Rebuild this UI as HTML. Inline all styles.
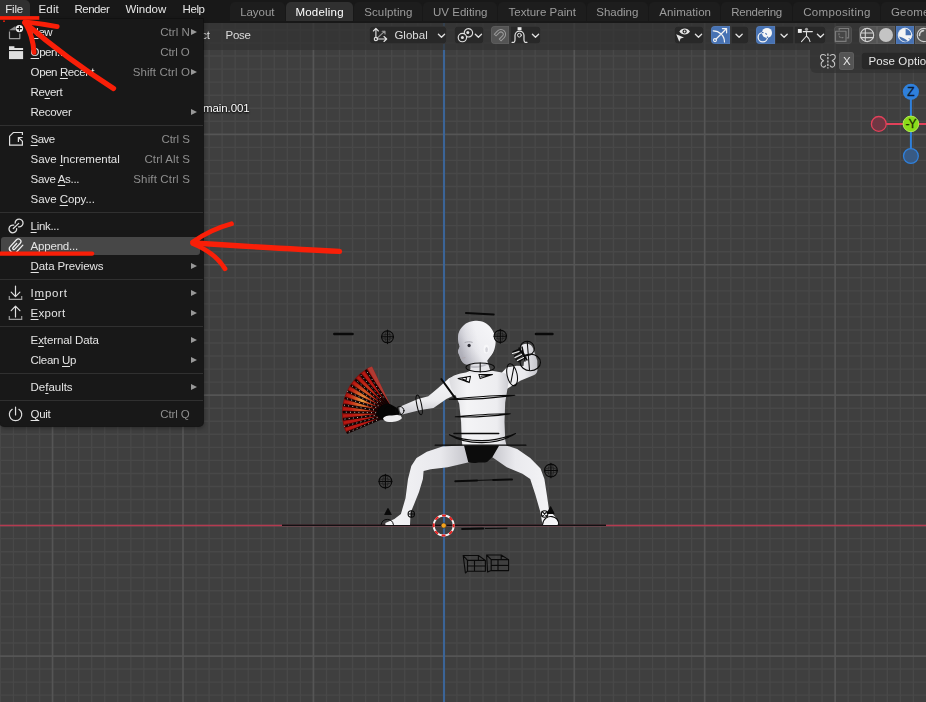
<!DOCTYPE html>
<html><head><meta charset="utf-8"><title>Blender</title>
<style>
html,body{margin:0;padding:0;}
body{width:926px;height:702px;overflow:hidden;position:relative;background:#3f3f3f;font-family:"Liberation Sans",sans-serif;font-size:11.5px;color:#e0e0e0;}
#vp{position:absolute;left:0;top:0;width:926px;height:702px;}
#topbar{position:absolute;left:0;top:0;width:926px;height:22.7px;background:#181818;}
#hdr{position:absolute;left:0;top:22px;width:926px;height:27.5px;background:rgba(50,50,50,0.72);}
#tset{position:absolute;left:809.8px;top:49.5px;width:130px;height:23.8px;background:rgba(50,50,50,0.72);border-radius:0 0 0 6px;}
.abs{position:absolute;white-space:nowrap;}
.t{position:absolute;white-space:nowrap;line-height:14px;}
.t u{text-decoration:underline;text-underline-offset:1.5px;text-decoration-thickness:1px;}
.sh{text-shadow:0 0 2px #000,0 1px 2px #000;}
.tab{position:absolute;top:1.8px;height:19.2px;border-radius:5px 5px 0 0;background:#1d1d1d;}
#menu{position:absolute;left:0;top:19px;width:202.8px;height:406.6px;background:#181818;border-radius:0 0 4px 4px;box-shadow:0 0 0 1px rgba(16,16,16,.8), 1px 2px 4px rgba(0,0,0,.35);}
.hl{position:absolute;background:#474747;border-radius:3px;}
.sep{position:absolute;left:0;width:202.8px;height:1px;background:#303030;}
.arr{position:absolute;left:191.2px;width:0;height:0;border-left:6px solid #989898;border-top:3.5px solid transparent;border-bottom:3.5px solid transparent;}
.btn{position:absolute;height:18.4px;border-radius:4px;background:#282828;box-shadow:inset 0 0 0 0.8px rgba(255,255,255,0.07);}
#ui{position:absolute;left:0;top:0;width:926px;height:702px;will-change:transform;}

</style></head><body>
<svg id="vp" width="926" height="702" viewBox="0 0 926 702">
<rect width="926" height="702" fill="#3f3f3f"/>
<path d="M0 16.92H926M0 29.97H926M0 43.01H926M0 56.05H926M0 69.10H926M0.39 0V702M0 82.14H926M13.43 0V702M0 95.18H926M26.47 0V702M0 108.22H926M39.52 0V702M0 121.27H926M65.60 0V702M0 147.35H926M78.65 0V702M0 160.40H926M91.69 0V702M0 173.44H926M104.73 0V702M0 186.48H926M117.78 0V702M0 199.53H926M130.82 0V702M0 212.57H926M143.86 0V702M0 225.61H926M156.90 0V702M0 238.65H926M169.95 0V702M0 251.70H926M196.03 0V702M0 277.78H926M209.08 0V702M0 290.83H926M222.12 0V702M0 303.87H926M235.16 0V702M0 316.91H926M248.21 0V702M0 329.96H926M261.25 0V702M0 343.00H926M274.29 0V702M0 356.04H926M287.33 0V702M0 369.08H926M300.38 0V702M0 382.13H926M326.46 0V702M0 408.21H926M339.51 0V702M0 421.26H926M352.55 0V702M0 434.30H926M365.59 0V702M0 447.34H926M378.63 0V702M0 460.38H926M391.68 0V702M0 473.43H926M404.72 0V702M0 486.47H926M417.76 0V702M0 499.51H926M430.81 0V702M0 512.56H926M456.89 0V702M0 538.64H926M469.94 0V702M0 551.69H926M482.98 0V702M0 564.73H926M496.02 0V702M0 577.77H926M509.07 0V702M0 590.82H926M522.11 0V702M0 603.86H926M535.15 0V702M0 616.90H926M548.19 0V702M0 629.94H926M561.24 0V702M0 642.99H926M587.32 0V702M0 669.07H926M600.37 0V702M0 682.12H926M613.41 0V702M0 695.16H926M626.45 0V702M639.50 0V702M652.54 0V702M665.58 0V702M678.62 0V702M691.67 0V702M717.75 0V702M730.80 0V702M743.84 0V702M756.88 0V702M769.92 0V702M782.97 0V702M796.01 0V702M809.05 0V702M822.10 0V702M848.18 0V702M861.23 0V702M874.27 0V702M887.31 0V702M900.36 0V702M913.40 0V702" stroke="#484848" stroke-width="1.4" fill="none"/><path d="M0 3.88H926M52.56 0V702M0 134.31H926M182.99 0V702M0 264.74H926M313.42 0V702M0 395.17H926M443.85 0V702M0 525.60H926M574.28 0V702M0 656.03H926M704.71 0V702M835.14 0V702" stroke="#555555" stroke-width="1.7" fill="none"/>
<line x1="0" y1="525.5" x2="926" y2="525.5" stroke="#b53a50" stroke-width="1.45"/>
<line x1="444" y1="0" x2="444" y2="702" stroke="#3b6497" stroke-width="2.1"/>
<defs>
<linearGradient id="sk" x1="0" y1="0" x2="0" y2="1"><stop offset="0" stop-color="#f6f6f8"/><stop offset="0.65" stop-color="#ebebee"/><stop offset="1" stop-color="#c8c8ce"/></linearGradient>
<linearGradient id="skh" x1="1" y1="0" x2="0" y2="1"><stop offset="0" stop-color="#f8f8fa"/><stop offset="0.6" stop-color="#ececf0"/><stop offset="1" stop-color="#b8b8c0"/></linearGradient>
<linearGradient id="skl" x1="0" y1="0" x2="1" y2="0"><stop offset="0" stop-color="#f4f4f6"/><stop offset="0.65" stop-color="#e9e9ed"/><stop offset="1" stop-color="#c4c4ca"/></linearGradient>
<linearGradient id="skr" x1="1" y1="0" x2="0" y2="0"><stop offset="0" stop-color="#f6f6f8"/><stop offset="0.65" stop-color="#eaeaee"/><stop offset="1" stop-color="#c6c6cc"/></linearGradient>
<linearGradient id="skt" x1="0" y1="0" x2="1" y2="0"><stop offset="0" stop-color="#dcdce0"/><stop offset="0.3" stop-color="#f4f4f6"/><stop offset="0.8" stop-color="#ededf0"/><stop offset="1" stop-color="#cacad0"/></linearGradient>
<linearGradient id="fsh" x1="0" y1="0.45" x2="0.5" y2="0.3"><stop offset="0" stop-color="#9c9ca8" stop-opacity="0.6"/><stop offset="0.5" stop-color="#b0b0bc" stop-opacity="0.25"/><stop offset="1" stop-color="#c0c0c8" stop-opacity="0"/></linearGradient>
<radialGradient id="fanhl" cx="0.4" cy="0.5" r="0.3"><stop offset="0" stop-color="#f0b048" stop-opacity="0.95"/><stop offset="1" stop-color="#e06020" stop-opacity="0"/></radialGradient>
</defs>
<g id="fig">
<path d="M282 525.2H606" stroke="#121012" stroke-width="1.5"/>
<path d="M392.3 409.4L372.1 366.7L368.8 367.5L366.0 369.2L363.3 371.1L360.6 373.1L358.2 375.3L355.8 377.7L353.7 380.2L351.7 382.8L349.8 385.6L348.2 388.4L346.7 391.4L345.4 394.4L344.3 397.6L343.5 400.8L342.8 404.0L342.3 407.3L342.1 410.6L342.0 413.9L342.2 417.2L342.5 420.5L343.1 423.8L343.9 427.0L344.9 430.1L346.8 432.9L384.8 416.9 Z" fill="#86110d"/>
<path d="M384.2 395.6L369.1 368.5" stroke="#c21a14" stroke-width="2.6" opacity="0.85"/>
<path d="M381.9 397.1L363.1 372.4" stroke="#c21a14" stroke-width="2.6" opacity="0.85"/>
<path d="M379.8 398.9L357.8 377.1" stroke="#c21a14" stroke-width="2.6" opacity="0.85"/>
<path d="M378.0 401.0L353.2 382.4" stroke="#c21a14" stroke-width="2.6" opacity="0.85"/>
<path d="M376.5 403.3L349.3 388.4" stroke="#c21a14" stroke-width="2.6" opacity="0.85"/>
<path d="M375.3 405.9L346.4 394.8" stroke="#c21a14" stroke-width="2.6" opacity="0.85"/>
<path d="M374.5 408.5L344.3 401.6" stroke="#c21a14" stroke-width="2.6" opacity="0.85"/>
<path d="M374.1 411.3L343.2 408.6" stroke="#c21a14" stroke-width="2.6" opacity="0.85"/>
<path d="M374.0 414.0L343.1 415.7" stroke="#c21a14" stroke-width="2.6" opacity="0.85"/>
<path d="M374.4 416.8L343.9 422.7" stroke="#c21a14" stroke-width="2.6" opacity="0.85"/>
<path d="M375.1 419.5L345.8 429.5" stroke="#c21a14" stroke-width="2.6" opacity="0.85"/>
<path d="M392.3 409.4L372.1 366.7L368.8 367.5L366.0 369.2L363.3 371.1L360.6 373.1L358.2 375.3L355.8 377.7L353.7 380.2L351.7 382.8L349.8 385.6L348.2 388.4L346.7 391.4L345.4 394.4L344.3 397.6L343.5 400.8L342.8 404.0L342.3 407.3L342.1 410.6L342.0 413.9L342.2 417.2L342.5 420.5L343.1 423.8L343.9 427.0L344.9 430.1L346.8 432.9L384.8 416.9 Z" fill="url(#fanhl)"/>
<path d="M390.6 405.8L372.0 366.4L367.6 368.2L389.9 406.1Z" fill="#b03a32"/>
<path d="M392.4 410.5L365.8 369.9" stroke="#120303" stroke-width="2.3"/>
<path d="M383.8 397.4L365.8 369.9" stroke="#f0e4e0" stroke-width="1" stroke-dasharray="1 3.2" stroke-linecap="butt" opacity="0.8"/>
<path d="M392.0 410.7L360.1 374.3" stroke="#120303" stroke-width="2.3"/>
<path d="M380.7 397.8L360.1 374.3" stroke="#f0e4e0" stroke-width="1" stroke-dasharray="1 3.2" stroke-linecap="butt" opacity="0.8"/>
<path d="M391.7 411.0L355.0 379.3" stroke="#120303" stroke-width="2.3"/>
<path d="M380.5 401.4L355.0 379.3" stroke="#f0e4e0" stroke-width="1" stroke-dasharray="1 3.2" stroke-linecap="butt" opacity="0.8"/>
<path d="M391.5 411.4L350.7 385.1" stroke="#120303" stroke-width="2.3"/>
<path d="M377.7 402.5L350.7 385.1" stroke="#f0e4e0" stroke-width="1" stroke-dasharray="1 3.2" stroke-linecap="butt" opacity="0.8"/>
<path d="M391.3 411.7L347.3 391.3" stroke="#120303" stroke-width="2.3"/>
<path d="M378.6 405.8L347.3 391.3" stroke="#f0e4e0" stroke-width="1" stroke-dasharray="1 3.2" stroke-linecap="butt" opacity="0.8"/>
<path d="M391.1 412.1L344.7 398.0" stroke="#120303" stroke-width="2.3"/>
<path d="M376.2 407.6L344.7 398.0" stroke="#f0e4e0" stroke-width="1" stroke-dasharray="1 3.2" stroke-linecap="butt" opacity="0.8"/>
<path d="M391.0 412.5L343.1 405.0" stroke="#120303" stroke-width="2.3"/>
<path d="M374.0 409.9L343.1 405.0" stroke="#f0e4e0" stroke-width="1" stroke-dasharray="1 3.2" stroke-linecap="butt" opacity="0.8"/>
<path d="M391.0 412.9L342.5 412.1" stroke="#120303" stroke-width="2.3"/>
<path d="M376.2 412.7L342.5 412.1" stroke="#f0e4e0" stroke-width="1" stroke-dasharray="1 3.2" stroke-linecap="butt" opacity="0.8"/>
<path d="M391.0 413.4L342.9 419.3" stroke="#120303" stroke-width="2.3"/>
<path d="M374.7 415.4L342.9 419.3" stroke="#f0e4e0" stroke-width="1" stroke-dasharray="1 3.2" stroke-linecap="butt" opacity="0.8"/>
<path d="M391.1 413.8L344.2 426.3" stroke="#120303" stroke-width="2.3"/>
<path d="M377.6 417.4L344.2 426.3" stroke="#f0e4e0" stroke-width="1" stroke-dasharray="1 3.2" stroke-linecap="butt" opacity="0.8"/>
<path d="M391.2 414.2L346.6 433.0" stroke="#120303" stroke-width="2.3"/>
<path d="M376.9 420.2L346.6 433.0" stroke="#f0e4e0" stroke-width="1" stroke-dasharray="1 3.2" stroke-linecap="butt" opacity="0.8"/>
<path d="M376 414C378 406 386 402 391 404.5L398 408.5L400 416L392 419L382 420Z" fill="#050505"/>
<circle cx="389.5" cy="411.5" r="5.6" fill="#050505"/>
<path d="M456 375.4L449 378.3L438.7 387.4L428.3 396.2L417.9 399L399.8 406.8C398.8 409 400 413 402.4 414.6L420.5 410L433.5 408.1L446.4 399L457 394Z" fill="url(#sk)"/>
<path d="M383 418.5C384 416 388 415.5 392 415.5L400 414.5L402 418C400 421 394 422.3 389 422C386 421.8 383.5 420.5 383 418.5Z" fill="#ececee"/>
<path d="M502 372.6L506.7 367.4L516.7 365.8L523.5 366L524.1 360.8L521.5 354L520.8 347C521.5 344.8 524 343.6 527.4 343.8C530 344 532 345.4 533.2 348.4L537.3 360.8L537.4 370.7C537 373.5 535 375 532.4 375.7L520.8 380.6L512.5 385.6L506 389.5Z" fill="url(#skl)"/>
<path d="M466 445.2L442.4 446.5L426.8 451.7L416.5 458.1L411.3 465.9L408 478.9L405.5 498.3L400.9 513.9L394.4 519L385.4 522.9V524.9H410L410.6 512.6L413.9 504.8L419.1 491.8L422.9 478.9L423.6 471.1L430.7 469.2L447.6 467.2L469 462.2Z" fill="url(#skl)"/>
<path d="M498 445.2H505.5L517.2 449.1L530.2 458.1L540.5 468.5L544.4 478.9L547 495.7L549 510L556.1 517.8L558.7 522.9L557.4 524.9H542.5L540.5 512.6L535.3 494.4L530.2 478.9L522.4 473.7L506.8 467.2L492 457Z" fill="url(#skr)"/>
<path d="M449 379.5C452 375.5 458 373.8 466 372.5L471 370.6H490.5L502 372.6C506 373 508.5 376 509 380L507.8 386.8L505.2 402.4L504.5 421.8L505.2 440L506.5 445.4H462.4L461.7 440L461.1 421.8L459.2 403.7L455.9 395.9L451 388Z" fill="url(#skt)"/>
<path d="M464 445.6H499.2L492.6 456.8L487.4 461.8C484 463.2 480 462.2 477 462.8C474 463.2 471 463 468.2 462Z" fill="#0c0c0c"/>
<path d="M471.2 362L470 371.5L466 373.4H494L490.5 371.3L487 360Z" fill="#e6e6ea"/>
<path d="M470.6 365.2C476 366.6 482 365.6 487.6 362.4L488 364.6C482 367.8 476 368.6 470.4 367.4Z" fill="#b4b4bc" opacity="0.8"/>
<path d="M475.1 320.8C478.5 320.4 482 321.2 484.5 322.5C487.5 324 489.8 326.2 491.3 328.5C493 331 494.2 333.4 494.7 335.4C495.4 338 495.8 340.6 495.6 343.1C495.4 346 494.8 348.6 493.9 350.8C492.8 353.4 491.2 355.6 489.6 357.6L486.2 361.9C480 364.4 473 365.2 466.5 364.4C465 364.2 463.8 363.6 463.1 362.7C462 361.4 461 359.8 460.5 358.4L459.4 355.6L458.4 353.3C458 352.4 457.9 351.6 458 350.8L459.7 346.5C458.8 344.4 458.2 342 458 339.6C457.9 337.2 458.2 334.8 458.8 332.8C459.8 330 461.2 327.8 463.1 326C464.8 324.2 467 322.8 469.1 322.1C471 321.3 473 320.9 475.1 320.8Z" fill="url(#skh)"/>
<path d="M475.1 320.8C478.5 320.4 482 321.2 484.5 322.5C487.5 324 489.8 326.2 491.3 328.5C493 331 494.2 333.4 494.7 335.4C495.4 338 495.8 340.6 495.6 343.1C495.4 346 494.8 348.6 493.9 350.8C492.8 353.4 491.2 355.6 489.6 357.6L486.2 361.9C480 364.4 473 365.2 466.5 364.4C465 364.2 463.8 363.6 463.1 362.7C462 361.4 461 359.8 460.5 358.4L459.4 355.6L458.4 353.3C458 352.4 457.9 351.6 458 350.8L459.7 346.5C458.8 344.4 458.2 342 458 339.6C457.9 337.2 458.2 334.8 458.8 332.8C459.8 330 461.2 327.8 463.1 326C464.8 324.2 467 322.8 469.1 322.1C471 321.3 473 320.9 475.1 320.8Z" fill="url(#fsh)"/>
<ellipse cx="486.3" cy="349.2" rx="2.7" ry="4.4" fill="#f7f7f9"/>
<ellipse cx="486.6" cy="349.6" rx="1.3" ry="2.7" fill="#d4d4da"/>
<ellipse cx="469.1" cy="345.5" rx="1.6" ry="1.8" fill="#2e2e36"/>
<path d="M464.6 342.6C467 341.6 470.5 341.6 472.6 342.4" stroke="#a6a6ae" stroke-width="1" fill="none"/>
<path d="M461.6 358.2L465.4 357.6" stroke="#b0a6aa" stroke-width="0.9"/>
<g fill="none" stroke="#0a0a0a" stroke-width="1.05" stroke-linecap="round" stroke-linejoin="round"><g stroke-width="0.9"><circle cx="387.5" cy="336.8" r="6" stroke-width="1.1"/><ellipse cx="387.5" cy="336.8" rx="6" ry="2.5" stroke-width="0.6" opacity="0.7"/><ellipse cx="387.5" cy="336.8" rx="2.5" ry="6" stroke-width="0.6" opacity="0.7"/><path d="M381.5 336.8H393.5M387.5 330.0V343.6" stroke-width="1.1"/></g><g stroke-width="0.9"><circle cx="500.3" cy="336.3" r="6.2" stroke-width="1.1"/><ellipse cx="500.3" cy="336.3" rx="6.2" ry="2.6" stroke-width="0.6" opacity="0.7"/><ellipse cx="500.3" cy="336.3" rx="2.6" ry="6.2" stroke-width="0.6" opacity="0.7"/><path d="M494.1 336.3H506.5M500.3 329.3V343.3" stroke-width="1.1"/></g><g stroke-width="0.9"><circle cx="385.4" cy="481.5" r="6.4" stroke-width="1.1"/><ellipse cx="385.4" cy="481.5" rx="6.4" ry="2.7" stroke-width="0.6" opacity="0.7"/><ellipse cx="385.4" cy="481.5" rx="2.7" ry="6.4" stroke-width="0.6" opacity="0.7"/><path d="M379.0 481.5H391.79999999999995M385.4 474.3V488.7" stroke-width="1.1"/></g><g stroke-width="0.9"><circle cx="550.9" cy="470.5" r="6.4" stroke-width="1.1"/><ellipse cx="550.9" cy="470.5" rx="6.4" ry="2.7" stroke-width="0.6" opacity="0.7"/><ellipse cx="550.9" cy="470.5" rx="2.7" ry="6.4" stroke-width="0.6" opacity="0.7"/><path d="M544.5 470.5H557.3M550.9 463.3V477.7" stroke-width="1.1"/></g><path d="M334.3 334H352.6" stroke-width="2.4"/><path d="M535.9 334H552.5" stroke-width="2.4"/><path d="M465.9 313L493.8 314.5" stroke-width="1.8"/><path d="M455.3 481.2L477 480.4M493.2 479.9L512 479.5" stroke-width="2"/><path d="M477 480.4L493.2 479.9" stroke-width="1"/><path d="M462.1 529L483.2 528.5" stroke-width="2"/><path d="M485.4 528.5L507 528.2" stroke-width="1"/><ellipse cx="480.2" cy="367.4" rx="14.2" ry="4.4"/><path d="M480.2 363V372"/><path d="M458.1 378.4L470.5 376.3L469.2 382.6Z M462 378.6L468 381.5M466.5 377L466 381.6"/><path d="M478.9 374.5H492.5L480.2 378.6Z M481 376.2L490 375"/><path d="M441.3 379L455 397.8" stroke-width="2"/><ellipse cx="419.2" cy="404.9" rx="2.3" ry="10" transform="rotate(-12 419.2 404.9)"/><circle cx="399.8" cy="410.7" r="4.2" stroke-width="1"/><ellipse cx="512.1" cy="374.8" rx="5" ry="11.2" transform="rotate(-12 512.1 374.8)"/><path d="M513.8 367.4L510.9 382.3"/><circle cx="527.2" cy="348.4" r="7.2"/><ellipse cx="530.3" cy="362.4" rx="10.2" ry="8.3"/><path d="M527.2 341.4L529.5 370.3"/><path d="M513 352L520 349M514.5 356L522 351M516 359.5L524 354M518.5 361.5L526 357M519 348L527 360M522 347L525 361" stroke-width="1.5"/><path d="M512.5 353.5L519 351.5M515 357.5L521.5 354.5M517.5 360.5L523.5 357.5" stroke="#f0f0f0" stroke-width="1.1"/><path d="M449.4 399.2C470 397.5 495 394.8 514.9 395.3C495 397.8 470 400.2 449.4 399.2Z" stroke-width="1.1"/><path d="M455.3 416.7C472 415.4 495 413.2 510.3 413.8C495 415.8 472 417.6 455.3 416.7Z" stroke-width="1.1"/><path d="M454 433.5H498.7" stroke-width="1.5"/><path d="M449.4 434.8C458 440.5 470 442.6 481.8 442.6C494 442.6 506 439.5 515.5 433.5C506 437.5 494 440.6 481.8 440.6C470 440.6 458 438.8 449.4 434.8Z" stroke-width="1.1"/><path d="M435.2 445.2H525.9" stroke-width="1.3"/><path d="M388 508.6L391.2 514.4H384.8Z" fill="#0a0a0a"/><path d="M381.2 524.5A6.2 6.2 0 0 1 393.4 524.5" stroke-width="1"/><circle cx="411.3" cy="513.9" r="3.2"/><path d="M408.3 513.9H414.3M411.3 510.9V516.9"/><path d="M550.6 506.8L554 513.4H547.2Z" fill="#0a0a0a"/><path d="M542.6 524.5C543 518.5 548 516 552 516.6C556 517.2 558.6 520.5 558.8 524.5" stroke-width="1.1"/><circle cx="544.6" cy="514" r="3.2"/><path d="M542 511.4L547.2 516.6M547.2 511.4L542 516.6"/><path d="M467.5 560.4H485.4V571.2H467.5ZM463.2 555.5H478.4L485.4 560.4M463.2 555.5L467.5 560.4M463.2 555.5L465.4 573L467.5 571.2M474.5 560.4V571.2M467.5 566H485.4M478.4 555.5V560" stroke-width="1.1"/><path d="M491.2 559.6H508.6V570.6H491.2ZM486.6 555H501.2L508.6 559.6M486.6 555L491.2 559.6M486.6 555L487.6 572L491.2 570.6M498 559.6V570.6M491.2 565.4H508.6M501.2 555V559.6" stroke-width="1.1"/></g>
<circle cx="443.7" cy="525.5" r="10" fill="none" stroke="#f4f4f4" stroke-width="1.9"/>
<circle cx="443.7" cy="525.5" r="10" fill="none" stroke="#e81e1e" stroke-width="1.9" stroke-dasharray="3.93 3.93" stroke-dashoffset="2"/>
<circle cx="443.7" cy="525.5" r="2.6" fill="#f5a21c" stroke="#2a2a2a" stroke-width="0.6"/>
</g>
<g id="gizmo" font-family="Liberation Sans, sans-serif" font-size="12" text-anchor="middle">
<line x1="910.9" y1="99" x2="910.9" y2="149" stroke="#2f80dc" stroke-width="2"/>
<line x1="886" y1="123.9" x2="926" y2="123.9" stroke="#e2415a" stroke-width="2"/>
<circle cx="910.9" cy="91.8" r="8.1" fill="#2f80dc"/>
<circle cx="878.8" cy="123.9" r="7.4" fill="#6f3743" stroke="#e2415a" stroke-width="1.3"/>
<circle cx="910.9" cy="156" r="7.4" fill="#385a84" stroke="#2f80dc" stroke-width="1.3"/>
<circle cx="910.9" cy="123.9" r="7.8" fill="#8bdc1a" stroke="#b2ec52" stroke-width="1"/>
<text x="910.9" y="96" fill="#0b1c36" stroke="#0b1c36" stroke-width="0.3">Z</text>
<text x="910.4" y="128.2" fill="#1c2e04" stroke="#1c2e04" stroke-width="0.3" letter-spacing="-1">-Y</text>
</g>

</svg>
<div id="ui">
<div id="hdr"></div>
<div id="tset"></div>
<span class="t " style="left:201.2px;top:27.62px;font-size:11.5px;letter-spacing:-0.137px;color:#dcdcdc;">ct</span>
<span class="t " style="left:225.6px;top:27.62px;font-size:11.5px;letter-spacing:-0.268px;color:#dcdcdc;">Pose</span>
<div class="btn" style="left:369px;top:26px;width:78px;"></div>
<span class="t " style="left:394.4px;top:27.62px;font-size:11.5px;letter-spacing:0.013px;color:#dddddd;">Global</span>
<div class="btn" style="left:454px;top:26px;width:30px;"></div>
<div class="btn" style="left:491px;top:26px;width:18px;background:#545454;border-radius:4px 0 0 4px;"></div>
<div class="btn" style="left:509.5px;top:26px;width:31.5px;border-radius:0 4px 4px 0;"></div>
<div class="btn" style="left:674px;top:26px;width:30px;"></div>
<div class="btn" style="left:711px;top:26px;width:19px;background:#4772b3;border-radius:4px 0 0 4px;"></div>
<div class="btn" style="left:730.5px;top:26px;width:18.5px;border-radius:0 4px 4px 0;"></div>
<div class="btn" style="left:756px;top:26px;width:18.5px;background:#4772b3;border-radius:4px 0 0 4px;"></div>
<div class="btn" style="left:775px;top:26px;width:18.5px;border-radius:0;"></div>
<div class="btn" style="left:794.3px;top:26px;width:31.7px;border-radius:0 4px 4px 0;"></div>
<div class="btn" style="left:834px;top:26px;width:17.5px;background:#464646;"></div>
<div class="btn" style="left:859px;top:26px;width:17.5px;background:#545454;border-radius:4px 0 0 4px;"></div>
<div class="btn" style="left:877px;top:26px;width:18px;background:#545454;border-radius:0;"></div>
<div class="btn" style="left:895.7px;top:26px;width:18.5px;background:#4772b3;border-radius:0;"></div>
<div class="btn" style="left:915px;top:26px;width:18px;background:#545454;border-radius:0;"></div>
<div class="btn" style="left:838.7px;top:52px;width:15.5px;background:#545454;border-radius:3px;"></div>
<span class="t " style="left:842.9px;top:53.72px;font-size:11.5px;letter-spacing:0.000px;color:#e6e6e6;">X</span>
<div class="btn" style="left:860.5px;top:52px;width:80px;"></div>
<span class="t " style="left:868.4px;top:53.72px;font-size:11.5px;letter-spacing:0.109px;color:#e6e6e6;">Pose Options</span>
<svg class="abs" style="left:0;top:22px" width="926" height="56" viewBox="0 22 926 56">
<g fill="none" stroke="#e0e0e0" stroke-width="1.15" stroke-linecap="round" stroke-linejoin="round">
<!-- orientation icon -->
<path d="M376.9 38.4L384.8 31.2M382.2 31.2H385V34" stroke="#9a9a9a"/>
<path d="M375.9 37.4V28.6M373.4 31L375.9 28.4L378.4 31M377.5 39H386.5M384 36.5L386.7 39L384 41.5"/>
<circle cx="375.9" cy="39" r="1.6"/>
<!-- chevrons -->
<g stroke-width="1.3">
<path d="M438.4 34.2L441.5 37.3L444.6 34.2"/>
<path d="M475.3 34.2L478.4 37.3L481.5 34.2"/>
<path d="M532.4 34.2L535.5 37.3L538.6 34.2"/>
<path d="M695.4 34.2L698.5 37.3L701.6 34.2"/>
<path d="M736 34.2L739.1 37.3L742.2 34.2"/>
<path d="M781 34.2L784.1 37.3L787.2 34.2"/>
<path d="M817.4 34.2L820.5 37.3L823.6 34.2"/>
</g>
<!-- pivot -->
<path d="M464.3 33.6A4.2 4.2 0 1 1 466.6 36.6" />
<circle cx="462.4" cy="37.6" r="4.2"/>
<circle cx="462.4" cy="37.6" r="1.5" fill="#e0e0e0" stroke="none"/>
<circle cx="467.8" cy="32.5" r="1.5" fill="#e0e0e0" stroke="none"/>
<!-- magnet -->
<g transform="translate(500.9 34.3) rotate(-45)">
<path d="M-5 -3.5H0A3.5 3.5 0 0 1 0 3.5H-5" stroke="#9b9b9b" stroke-width="3.4" stroke-linecap="butt"/>
<path d="M-4.1 -3.5H0A3.5 3.5 0 0 1 0 3.5H-4.1" stroke="#545454" stroke-width="1.4" stroke-linecap="butt"/>
</g>
<!-- snap target -->
<rect x="517.6" y="27.2" width="3.9" height="2.9" fill="#ececec" stroke="none"/>
<path d="M512 42.3H513.8C515.4 42.3 515 38.5 515 35.6A4.5 4.5 0 0 1 524 35.6C524 38.5 523.6 42.3 525.2 42.3H527" stroke-width="1.2"/>
<circle cx="519.4" cy="35.2" r="1.9" stroke-width="1"/>
<!-- visibility: eye + cursor -->
<path d="M679.3 31.6C681.8 27.6 687.6 27.6 690 31.6C687.6 35.4 681.8 35.4 679.3 31.6Z" fill="#e6e6e6" stroke="none"/>
<circle cx="684.6" cy="31.5" r="2.1" fill="#282828" stroke="none"/>
<circle cx="684.6" cy="31.5" r="0.9" fill="#e6e6e6" stroke="none"/>
<path d="M676.2 34.3L684 37.6L680.6 38.6L679.3 41.8Z" fill="#e6e6e6" stroke="none"/>
<!-- gizmo -->
<path d="M713.2 30.8A11.2 11.2 0 0 1 724.5 41.9M716.1 39L726.4 28.8M722.4 28.6H726.6V32.8" stroke="#f2f2f2" stroke-width="1.2"/>
<circle cx="715" cy="40.1" r="1.5" stroke="#f2f2f2"/>
<!-- overlays -->
<circle cx="762.8" cy="37.2" r="4.7" stroke="#f6f6f6" stroke-width="1.25"/>
<circle cx="767" cy="32.9" r="5" fill="#f6f6f6" stroke="none"/>
<path d="M762.01 32.57A4.7 4.7 0 0 1 767.45 37.89" stroke="#4772b3" stroke-width="1.2" stroke-dasharray="1.5 2 1.9 2 1.5" stroke-linecap="butt"/>
<!-- pose overlay -->
<rect x="797.9" y="29" width="3.9" height="3.9" fill="#ececec" stroke="none"/>
<circle cx="806.5" cy="29.3" r="1.6" fill="#a0a0a0" stroke="none"/>
<path d="M803.2 31.6H812.4M806.5 31.6V36L801.5 41.6M806.5 36C808.5 37.5 809.6 39.5 810 41.6" stroke-width="1.05"/>
<!-- xray -->
<path d="M839.2 30.6V28.5H848.6V37.8H846.6" stroke="#7c7c7c" stroke-linecap="butt" stroke-linejoin="miter"/>
<rect x="835.5" y="31.2" width="10.5" height="10.2" stroke="#7c7c7c"/>
<path d="M839 33.6V34.8M839.4 36.6L840.2 37.4M841.8 37.6H843" stroke="#7c7c7c"/>
<!-- shading: wire -->
<circle cx="867.1" cy="35" r="6.6" stroke="#d4d4d4" stroke-width="1.1"/>
<path d="M865.3 28.8V41.2M860.8 33H873.4M860.8 37.6H873.4" stroke="#d4d4d4" stroke-width="1.1"/>
<circle cx="886" cy="35" r="7" fill="#c4c4c4" stroke="none"/>
<circle cx="905" cy="35" r="6.8" fill="#f4f4f4" stroke="#f4f4f4" stroke-width="0.8"/>
<path d="M905.6 28.8A6.2 6.2 0 0 1 911.2 35.2L905.6 35.2Z" fill="#4772b3" stroke="none"/>
<path d="M899.2 36.6C902 37.2 905.5 39 908 41.2C904.5 42.6 900 40.6 899.2 36.6Z" fill="#4772b3" stroke="none"/>
<path d="M909 38.4L910.6 40" stroke="#4772b3" stroke-width="0.9"/>
<circle cx="923.8" cy="35" r="6.6" stroke="#cfcfcf" stroke-width="1.1"/>
<path d="M919.5 35.5A4.6 4.6 0 0 1 923.5 30.6" stroke="#cfcfcf" stroke-width="1.6"/>
<!-- mirror butterfly -->
<path d="M825.6 55.4C822.6 53.4 819.8 55 820.6 57.8C821.2 59.6 823 60.2 823.6 60.8C822 61.6 820.6 63.4 821.4 65.6C822.4 67.8 824.8 67.4 825.6 65.8" stroke="#c8c8c8" stroke-width="1.05"/>
<path d="M830.2 55.4C833.2 53.4 836 55 835.2 57.8C834.6 59.6 832.8 60.2 832.2 60.8C833.8 61.6 835.2 63.4 834.4 65.6C833.4 67.8 831 67.4 830.2 65.8" stroke="#c8c8c8" stroke-width="1.05"/>
<path d="M827.9 53.6V68.4" stroke="#e8e8e8" stroke-width="1.1" stroke-dasharray="2.2 1.2" stroke-linecap="butt"/>
</g>
</svg>

<span class="t sh" style="left:203.0px;top:100.62px;font-size:11.5px;letter-spacing:-0.083px;color:#ffffff;">main.001</span>
<div id="topbar"></div>
<div class="abs" style="left:0;top:0;width:30px;height:18px;background:#303030;border-radius:0 5px 0 0;"></div>
<span class="t " style="left:5.3px;top:2.12px;font-size:11.5px;letter-spacing:-0.216px;color:#e6e6e6;">File</span>
<span class="t " style="left:38.5px;top:2.12px;font-size:11.5px;letter-spacing:0.162px;color:#e6e6e6;">Edit</span>
<span class="t " style="left:74.4px;top:2.12px;font-size:11.5px;letter-spacing:-0.461px;color:#e6e6e6;">Render</span>
<span class="t " style="left:125.4px;top:2.12px;font-size:11.5px;letter-spacing:-0.001px;color:#e6e6e6;">Window</span>
<span class="t " style="left:182.5px;top:2.12px;font-size:11.5px;letter-spacing:-0.385px;color:#e6e6e6;">Help</span>
<div class="tab" style="left:229.8px;width:55.4px;"></div>
<span class="t " style="left:240.2px;top:4.92px;font-size:11.5px;letter-spacing:-0.060px;color:#9c9c9c;">Layout</span>
<div class="tab" style="left:286px;width:67.2px;background:#303030;"></div>
<span class="t " style="left:295.4px;top:4.92px;font-size:11.5px;letter-spacing:0.221px;color:#ffffff;">Modeling</span>
<div class="tab" style="left:354.2px;width:67.8px;"></div>
<span class="t " style="left:364.2px;top:4.92px;font-size:11.5px;letter-spacing:0.125px;color:#9c9c9c;">Sculpting</span>
<div class="tab" style="left:423px;width:74.0px;"></div>
<span class="t " style="left:433.0px;top:4.92px;font-size:11.5px;letter-spacing:0.019px;color:#9c9c9c;">UV Editing</span>
<div class="tab" style="left:498px;width:87.5px;"></div>
<span class="t " style="left:508.5px;top:4.92px;font-size:11.5px;letter-spacing:0.018px;color:#9c9c9c;">Texture Paint</span>
<div class="tab" style="left:586.5px;width:61.5px;"></div>
<span class="t " style="left:596.3px;top:4.92px;font-size:11.5px;letter-spacing:-0.031px;color:#9c9c9c;">Shading</span>
<div class="tab" style="left:649px;width:71.0px;"></div>
<span class="t " style="left:659.3px;top:4.92px;font-size:11.5px;letter-spacing:0.072px;color:#9c9c9c;">Animation</span>
<div class="tab" style="left:721px;width:70.5px;"></div>
<span class="t " style="left:731.2px;top:4.92px;font-size:11.5px;letter-spacing:-0.256px;color:#9c9c9c;">Rendering</span>
<div class="tab" style="left:792.5px;width:87.5px;"></div>
<span class="t " style="left:803.2px;top:4.92px;font-size:11.5px;letter-spacing:0.329px;color:#9c9c9c;">Compositing</span>
<div class="tab" style="left:881px;width:69.0px;"></div>
<span class="t " style="left:891.0px;top:4.92px;font-size:11.5px;letter-spacing:0.150px;color:#9c9c9c;">Geometry</span>
<div id="menu">
</div>
<div class="hl" style="left:1px;top:237.3px;width:199px;height:17.6px;"></div>
<span class="t mi" style="left:30.6px;top:25.02px;font-size:11.5px;letter-spacing:-0.508px;color:#e4e4e4;"><u>N</u>ew</span>
<span class="t " style="left:160.3px;top:25.02px;font-size:11.5px;letter-spacing:0.022px;color:#8e8e8e;">Ctrl N</span>
<div class="arr" style="top:28.5px"></div>
<span class="t mi" style="left:30.6px;top:45.02px;font-size:11.5px;letter-spacing:-0.412px;color:#e4e4e4;"><u>O</u>pen...</span>
<span class="t " style="left:160.3px;top:45.02px;font-size:11.5px;letter-spacing:-0.103px;color:#8e8e8e;">Ctrl O</span>
<span class="t mi" style="left:30.6px;top:65.02px;font-size:11.5px;letter-spacing:-0.402px;color:#e4e4e4;">Open <u>R</u>ecent</span>
<span class="t " style="left:132.7px;top:65.02px;font-size:11.5px;letter-spacing:0.082px;color:#8e8e8e;">Shift Ctrl O</span>
<div class="arr" style="top:68.5px"></div>
<span class="t mi" style="left:30.6px;top:85.02px;font-size:11.5px;letter-spacing:-0.372px;color:#e4e4e4;">Re<u>v</u>ert</span>
<span class="t mi" style="left:30.6px;top:105.02px;font-size:11.5px;letter-spacing:-0.285px;color:#e4e4e4;">Recover</span>
<div class="arr" style="top:108.5px"></div>
<span class="t mi" style="left:30.6px;top:132.02px;font-size:11.5px;letter-spacing:-0.568px;color:#e4e4e4;"><u>S</u>ave</span>
<span class="t " style="left:161.5px;top:132.02px;font-size:11.5px;letter-spacing:-0.090px;color:#8e8e8e;">Ctrl S</span>
<span class="t mi" style="left:30.6px;top:152.02px;font-size:11.5px;letter-spacing:-0.023px;color:#e4e4e4;">Save <u>I</u>ncremental</span>
<span class="t " style="left:144.5px;top:152.02px;font-size:11.5px;letter-spacing:0.065px;color:#8e8e8e;">Ctrl Alt S</span>
<span class="t mi" style="left:30.6px;top:172.02px;font-size:11.5px;letter-spacing:-0.326px;color:#e4e4e4;">Save <u>A</u>s...</span>
<span class="t " style="left:133.3px;top:172.02px;font-size:11.5px;letter-spacing:0.142px;color:#8e8e8e;">Shift Ctrl S</span>
<span class="t mi" style="left:30.6px;top:192.02px;font-size:11.5px;letter-spacing:-0.067px;color:#e4e4e4;">Save <u>C</u>opy...</span>
<span class="t mi" style="left:30.6px;top:219.02px;font-size:11.5px;letter-spacing:-0.309px;color:#e4e4e4;"><u>L</u>ink...</span>
<span class="t mi" style="left:30.6px;top:239.02px;font-size:11.5px;letter-spacing:-0.198px;color:#e4e4e4;">Append...</span>
<span class="t mi" style="left:30.6px;top:259.02px;font-size:11.5px;letter-spacing:-0.110px;color:#e4e4e4;"><u>D</u>ata Previews</span>
<div class="arr" style="top:262.5px"></div>
<span class="t mi" style="left:30.6px;top:286.02px;font-size:11.5px;letter-spacing:0.748px;color:#e4e4e4;">I<u>m</u>port</span>
<div class="arr" style="top:289.5px"></div>
<span class="t mi" style="left:30.6px;top:306.02px;font-size:11.5px;letter-spacing:0.256px;color:#e4e4e4;"><u>E</u>xport</span>
<div class="arr" style="top:309.5px"></div>
<span class="t mi" style="left:30.6px;top:333.02px;font-size:11.5px;letter-spacing:-0.112px;color:#e4e4e4;">E<u>x</u>ternal Data</span>
<div class="arr" style="top:336.5px"></div>
<span class="t mi" style="left:30.6px;top:353.02px;font-size:11.5px;letter-spacing:-0.305px;color:#e4e4e4;">Clean <u>U</u>p</span>
<div class="arr" style="top:356.5px"></div>
<span class="t mi" style="left:30.6px;top:380.02px;font-size:11.5px;letter-spacing:-0.025px;color:#e4e4e4;">De<u>f</u>aults</span>
<div class="arr" style="top:383.5px"></div>
<span class="t mi" style="left:30.6px;top:407.02px;font-size:11.5px;letter-spacing:-0.293px;color:#e4e4e4;"><u>Q</u>uit</span>
<span class="t " style="left:160.3px;top:407.02px;font-size:11.5px;letter-spacing:-0.103px;color:#8e8e8e;">Ctrl Q</span>
<div class="sep" style="top:125.0px"></div>
<div class="sep" style="top:211.8px"></div>
<div class="sep" style="top:278.7px"></div>
<div class="sep" style="top:326.3px"></div>
<div class="sep" style="top:372.8px"></div>
<div class="sep" style="top:399.5px"></div>
<svg class="abs" style="left:0;top:19px" width="204" height="410" viewBox="0 19 204 410">
<g fill="none" stroke="#dedede" stroke-width="1.2" stroke-linecap="round" stroke-linejoin="round">
<!-- new file -->
<path d="M9.5 31.5V38.6H19.8V33.5" stroke="#9c9c9c" stroke-linecap="butt"/>
<path d="M9 30.2L14.6 26.4H15.6V30.2Z" fill="#8a8a8a" stroke="none"/>
<circle cx="19.4" cy="28.6" r="3.7" fill="#f2f2f2" stroke="none"/>
<path d="M17.2 28.6H21.6M19.4 26.4V30.8" stroke="#111" stroke-width="1.1"/>
<!-- folder -->
<path d="M9 46.2H14.4V48H23.1V50.1H9Z" fill="#dedede" stroke="none"/>
<rect x="9" y="51.1" width="14.1" height="8" fill="#dedede" stroke="none"/>
<!-- save -->
<path d="M22.4 135V132.5H13.3L9.6 136.2V145.2H22.4V141.2L18.6 137.6M18.4 142V137.5H22.6" stroke-linecap="butt" stroke-linejoin="miter"/>
<!-- link -->
<path d="M16.67 228.56A3.85 3.85 0 1 1 13.71 225.21" stroke-width="1.3"/>
<path d="M15.15 223.12A3.95 3.95 0 1 1 18.55 226.89" stroke-width="1.3"/>
<path d="M13.3 228.5L18.7 223.4" stroke-width="1.3"/>
<!-- append (paperclip) -->
<g transform="translate(15.37 244.75) rotate(-47)">
<path d="M1.8 0.15L-3.6 0.15A1.2 1.2 0 0 0 -3.6 2.55L4.4 2.55A2.55 2.55 0 0 0 4.4 -2.56L-5.2 -2.56A2.8 4.16 0 0 0 -5.2 5.76L4.8 5.76" stroke="#f0f0f0" stroke-width="1.25"/>
</g>
<!-- import -->
<path d="M15.5 286V296.4M11.2 292.2L15.5 296.6L19.9 292.2"/>
<path d="M9.3 296V299.4H21.7V296" stroke="#9c9c9c" stroke-linecap="butt" stroke-linejoin="miter"/>
<!-- export -->
<path d="M15.5 317V306.3M11.2 310.7L15.5 306.2L19.9 310.7"/>
<path d="M9.3 316V319.4H21.7V316" stroke="#9c9c9c" stroke-linecap="butt" stroke-linejoin="miter"/>
<!-- quit -->
<path d="M12.2 409.3A6.2 6.2 0 1 0 18.9 409.3M15.55 407.2V414.9"/>
</g>
</svg>


</div>
<svg id="anno" class="abs" style="left:0;top:0" width="926" height="702" viewBox="0 0 926 702">
<g fill="none" stroke="#f91f08" stroke-linecap="round" stroke-linejoin="round">
<rect x="0" y="16.1" width="39.3" height="3.7" fill="#f91f08" stroke="none"/>
<circle cx="4" cy="21.2" r="0.9" fill="#f91f08" stroke="none"/>
<path d="M24.8 22.8 Q66.6 58.8 113.5 88.4" stroke-width="5.3"/>
<path d="M24.8 21.8 C36 23 47 24.6 57.2 26.6" stroke-width="4.8"/>
<path d="M25.4 23.2 C29.5 30 33.2 40 34 52.3" stroke-width="5"/>
<path d="M0 253.6 H92.2" stroke-width="4.2"/>
<path d="M193.2 243 C240 246 290 249.2 339.5 251.3" stroke-width="5.3"/>
<path d="M192.5 242.2 C204 234 218 227.5 231.5 223.8" stroke-width="4.8"/>
<path d="M192.8 243.6 C206 249 218 257 225 268.8" stroke-width="4.8"/>
</g>

</svg>
</body></html>
